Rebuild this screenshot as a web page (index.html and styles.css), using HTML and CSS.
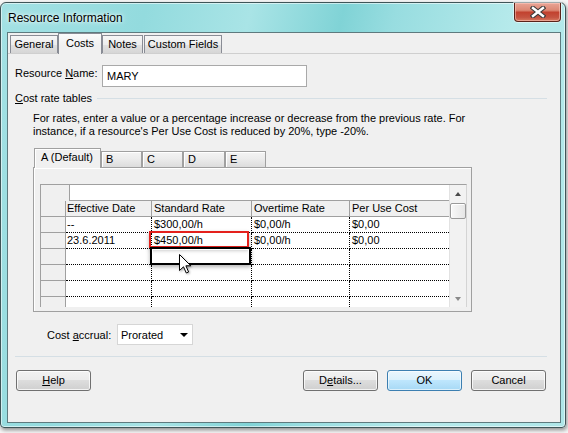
FILE: index.html
```html
<!DOCTYPE html>
<html>
<head>
<meta charset="utf-8">
<link rel="stylesheet" href="styles.css">
</head>
<body>
<div class="window">
  <div class="titlebar">
    <span class="title">Resource Information</span>
    <div class="close">
      <svg width="16" height="12" viewBox="0 0 16 12">
        <path d="M3 2 L13 10 M13 2 L3 10" stroke="#3a3a3a" stroke-width="4.6" stroke-linecap="square"/>
        <path d="M3 2 L13 10 M13 2 L3 10" stroke="#ffffff" stroke-width="2.4" stroke-linecap="square"/>
      </svg>
    </div>
  </div>
  <div class="client">
    <div class="tabs">
      <div class="tab t-general">General</div>
      <div class="tab on t-costs">Costs</div>
      <div class="tab t-notes">Notes</div>
      <div class="tab t-custom">Custom Fields</div>
    </div>
    <div class="page">
      <div class="namerow">
        <label class="namelbl">Resource <u>N</u>ame:</label>
        <div class="input">MARY</div>
      </div>
      <div class="group">
        <span><u>C</u>ost rate tables</span>
        <div class="gline"></div>
      </div>
      <p class="hint">For rates, enter a value or a percentage increase or decrease from the previous rate. For<br>instance, if a resource's Per Use Cost is reduced by 20%, type -20%.</p>
      <div class="tabctl">
        <div class="itabs">
          <div class="itab on t-a">A (Default)</div>
          <div class="itab t-b">B</div>
          <div class="itab t-b">C</div>
          <div class="itab t-d">D</div>
          <div class="itab t-b">E</div>
        </div>
        <div class="ipanel">
          <div class="grid">
            <div class="gmain">
              <div class="entry"><div class="corner"></div><div class="ebox"></div></div>
              <div class="grow hdr">
                <div class="rh"></div>
                <div class="c c1">Effective Date</div>
                <div class="c c2">Standard Rate</div>
                <div class="c c3">Overtime Rate</div>
                <div class="c c4">Per Use Cost</div>
              </div>
              <div class="grow">
                <div class="rh"></div>
                <div class="c c1">--</div>
                <div class="c c2">$300,00/h</div>
                <div class="c c3">$0,00/h</div>
                <div class="c c4">$0,00</div>
              </div>
              <div class="grow">
                <div class="rh"></div>
                <div class="c c1">23.6.2011</div>
                <div class="c c2">$450,00/h</div>
                <div class="c c3">$0,00/h</div>
                <div class="c c4">$0,00</div>
              </div>
              <div class="grow">
                <div class="rh"></div><div class="c c1"></div><div class="c c2"></div><div class="c c3"></div><div class="c c4"></div>
              </div>
              <div class="grow">
                <div class="rh"></div><div class="c c1"></div><div class="c c2"></div><div class="c c3"></div><div class="c c4"></div>
              </div>
              <div class="grow">
                <div class="rh"></div><div class="c c1"></div><div class="c c2"></div><div class="c c3"></div><div class="c c4"></div>
              </div>
              <div class="grow">
                <div class="rh"></div><div class="c c1"></div><div class="c c2"></div><div class="c c3"></div><div class="c c4"></div>
              </div>
            </div>
            <div class="vscroll">
              <div class="sb-btn"><span class="tri-up"></span></div>
              <div class="thumb"></div>
              <div class="sb-fill"></div>
              <div class="sb-btn"><span class="tri-dn"></span></div>
            </div>
            <div class="redbox"></div>
            <div class="selbox"></div>
            <svg class="cursor" width="13" height="20" viewBox="0 0 13 20">
              <path d="M0.5 0.5 L0.5 16.5 L4.5 12.8 L7.3 19 L9.6 18 L6.9 11.8 L11.8 11.8 Z" fill="#ffffff" stroke="#000000" stroke-width="1" stroke-linejoin="miter"/>
            </svg>
          </div>
        </div>
      </div>
      <div class="accrual">
        <label class="acclbl">Cost <u>a</u>ccrual:</label>
        <div class="select"><span>Prorated</span><span class="tri-dd"></span></div>
      </div>
      <div class="sep"></div>
      <div class="buttons">
        <div class="btn"><u>H</u>elp</div>
        <div class="spacer"></div>
        <div class="btn">D<u>e</u>tails...</div>
        <div class="btn ok">OK</div>
        <div class="btn last">Cancel</div>
      </div>
    </div>
  </div>
</div>
</body>
</html>
```
FILE: styles.css
```css
html, body {
  margin: 0;
  padding: 0;
}
body {
  width: 568px;
  height: 433px;
  overflow: hidden;
  background: #f7f7f7;
  font-family: "Liberation Sans", Arial, sans-serif;
  font-size: 11px;
  color: #000;
}
.window {
  margin-top: 2px;
  width: 566px;
  height: 426px;
  box-sizing: border-box;
  border: 1px solid #3f5558;
  border-radius: 6px 6px 4px 4px;
  background: linear-gradient(103deg, #a3e1e4 0%, #93dbde 22%, #a9e4e6 38%, #80d3d6 52%, #98dde0 60%, #b6eaeb 78%, #aee6e8 100%);
  padding: 0 4px 4px 6px;
  display: flex;
  flex-direction: column;
  box-shadow: 1px 2px 4px rgba(0,0,0,0.45), inset 0 0 0 1px rgba(255,255,255,0.55);
}
.titlebar {
  height: 29px;
  display: flex;
  align-items: center;
  padding-left: 1px;
}
.title {
  flex: 1;
  font-size: 12px;
  margin-top: 1px;
  text-shadow: 0 0 6px #ffffff, 0 0 3px rgba(255,255,255,0.8);
}
.close {
  align-self: flex-start;
  width: 47px;
  height: 19px;
  box-sizing: border-box;
  border: 1px solid #5a231a;
  border-top: none;
  border-radius: 0 0 4px 4px;
  background: linear-gradient(#e9a596 0%, #dc8874 40%, #c2422f 52%, #c55441 80%, #d77a5f 100%);
  box-shadow: inset 0 0 0 1px rgba(255,210,200,0.5), 0 0 0 1px rgba(255,255,255,0.5);
  display: flex;
  align-items: center;
  justify-content: center;
}
.client {
  width: 554px;
  height: 391px;
  box-sizing: border-box;
  border: 1px solid #5e7a7e;
  background: #f0f0f0;
  display: flex;
  flex-direction: column;
}
.tabs {
  display: flex;
  align-items: flex-end;
  height: 20px;
  border-bottom: 1px solid #cfcfcf;
  padding-left: 2px;
}
.tab {
  height: 18px;
  box-sizing: border-box;
  border: 1px solid #898c95;
  border-bottom: none;
  background: linear-gradient(#f6f6f6, #ededed 50%, #e1e1e1 50%, #d6d6d6);
  text-align: center;
  line-height: 17px;
}
.tab.on {
  height: 21px;
  margin-bottom: -1px;
  background: linear-gradient(#fbfbfb, #f0f0f0 60%);
  line-height: 18px;
}
.t-general { width: 48px; }
.t-costs { width: 44px; }
.t-notes { width: 41px; }
.t-custom { width: 78px; margin-left: 1px; }
.page {
  flex: 1;
  display: flex;
  flex-direction: column;
  padding: 0 13px 0 7px;
}
.namerow {
  display: flex;
  align-items: flex-start;
  margin-top: 11px;
}
.namelbl {
  width: 87px;
  line-height: 13px;
  margin-top: 2px;
}
.input {
  width: 205px;
  height: 22px;
  box-sizing: border-box;
  border: 1px solid #a9a9a9;
  background: #fff;
  padding-left: 4px;
  line-height: 20px;
}
.group {
  display: flex;
  align-items: center;
  height: 13px;
  margin-top: 5px;
  line-height: 13px;
}
.gline {
  flex: 1;
  height: 1px;
  background: #d5dfe5;
  margin-left: 5px;
}
.hint {
  margin: 7px 0 0 18px;
  line-height: 13px;
}
.tabctl {
  margin: 10px 0 0 18px;
}
.itabs {
  display: flex;
  align-items: flex-end;
  height: 19px;
  padding-left: 1px;
}
.itab {
  height: 16px;
  box-sizing: border-box;
  border: 1px solid #a0a0a0;
  border-bottom: none;
  padding-left: 4px;
  line-height: 15px;
  background: linear-gradient(#f4f4f4, #ececec 45%, #dcdcdc);
  box-shadow: inset 1px 1px 0 #ffffff;
}
.itab.on {
  height: 20px;
  margin-bottom: -1px;
  padding-left: 6px;
  line-height: 17px;
  background: #f0f0f0;
  position: relative;
  z-index: 1;
}
.t-a { width: 67px; }
.t-b { width: 41px; }
.t-d { width: 42px; }
.ipanel {
  width: 439px;
  height: 145px;
  box-sizing: border-box;
  border: 1px solid #a0a0a0;
  box-shadow: inset 1px 1px 0 #ffffff;
  padding: 16px 0 0 6px;
}
.grid {
  position: relative;
  display: flex;
  width: 427px;
  height: 123px;
  box-sizing: border-box;
  border: 1px solid #a0a0a0;
  border-right-color: #d4d4d4;
  border-bottom: none;
  background: #fff;
}
.gmain {
  width: 408px;
  height: 122px;
  overflow: hidden;
}
.entry {
  display: flex;
  height: 16px;
}
.corner {
  width: 28px;
  background: #f0f0f0;
  border-right: 1px solid #a0a0a0;
}
.ebox {
  flex: 1;
  box-sizing: border-box;
  border-bottom: 1px solid #a0a0a0;
}
.grow {
  display: flex;
  height: 16px;
}
.rh {
  width: 25px;
  box-sizing: border-box;
  background: #f0f0f0;
  border-right: 1px solid #a0a0a0;
  border-bottom: 1px solid #a0a0a0;
}
.c {
  box-sizing: border-box;
  height: 16px;
  padding-left: 2px;
  line-height: 15px;
  white-space: nowrap;
  overflow: hidden;
  border-right: 1px dotted #000;
  border-bottom: 1px dotted #000;
}
.c1 { width: 86px; padding-left: 1px; }
.c2 { width: 100px; }
.c3 { width: 98px; }
.c4 { width: 99px; border-right: none; }
.hdr .c {
  background: #f0f0f0;
  border-right: 1px solid #a0a0a0;
  border-bottom: 1px solid #a0a0a0;
}
.hdr .c4 { border-right: none; }
.vscroll {
  width: 17px;
  box-sizing: border-box;
  border-left: 1px solid #e2e2e2;
  background: #f2f2f2;
  display: flex;
  flex-direction: column;
}
.sb-btn {
  height: 17px;
  display: flex;
  align-items: center;
  justify-content: center;
}
.tri-up {
  width: 0;
  height: 0;
  border-left: 3.5px solid transparent;
  border-right: 3.5px solid transparent;
  border-bottom: 4px solid #4a4a4a;
}
.tri-dn {
  width: 0;
  height: 0;
  border-left: 3.5px solid transparent;
  border-right: 3.5px solid transparent;
  border-top: 4px solid #8a8a8a;
}
.thumb {
  height: 16px;
  margin: 1px 0 0 0;
  box-sizing: border-box;
  border: 1px solid #9a9a9a;
  border-radius: 2px;
  background: linear-gradient(90deg, #f8f8f8, #e6e6e6);
  box-shadow: inset 1px 1px 0 #ffffff;
}
.sb-fill { flex: 1; }
.redbox {
  position: absolute;
  left: 108px;
  top: 46px;
  width: 100px;
  height: 17px;
  box-sizing: border-box;
  border: 2px solid #e4201c;
  box-shadow: 0 2px 4px rgba(0,0,0,0.3);
}
.selbox {
  position: absolute;
  left: 109px;
  top: 62px;
  width: 101px;
  height: 18px;
  box-sizing: border-box;
  border: 2px solid #000;
  box-shadow: inset 0 0 0 1px #ffffff, 0 2px 4px rgba(0,0,0,0.3);
}
.cursor {
  position: absolute;
  left: 138px;
  top: 69px;
  filter: drop-shadow(1px 1px 1px rgba(0,0,0,0.3));
}
.accrual {
  display: flex;
  align-items: center;
  height: 21px;
  margin-top: 12px;
  padding-left: 32px;
}
.acclbl { width: 70px; }
.select {
  width: 76px;
  height: 21px;
  box-sizing: border-box;
  border: 1px solid #d6d6d6;
  background: #fff;
  padding: 0 4px 0 3px;
  display: flex;
  align-items: center;
  justify-content: space-between;
}
.tri-dd {
  width: 0;
  height: 0;
  border-left: 4px solid transparent;
  border-right: 4px solid transparent;
  border-top: 4px solid #000;
}
.sep {
  height: 1px;
  background: #d5dfe5;
  margin-top: 11px;
}
.buttons {
  display: flex;
  margin-top: 13px;
  padding-left: 1px;
  gap: 9px;
}
.spacer { flex: 1; }
.btn {
  width: 75px;
  height: 21px;
  box-sizing: border-box;
  border: 1px solid #707070;
  border-radius: 3px;
  background: linear-gradient(#f2f2f2 0%, #ebebeb 50%, #dddddd 50%, #cfcfcf 100%);
  box-shadow: inset 0 0 0 1px rgba(255,255,255,0.75);
  text-align: center;
  line-height: 19px;
}
.btn.ok {
  border-color: #3c7fb1;
  background: linear-gradient(#eaf6fd 0%, #d9f0fc 50%, #bee6fd 50%, #a7d9f5 100%);
  box-shadow: inset 0 0 0 1px rgba(255,255,255,0.6);
}
.btn.last { margin-right: 1px; }
```
